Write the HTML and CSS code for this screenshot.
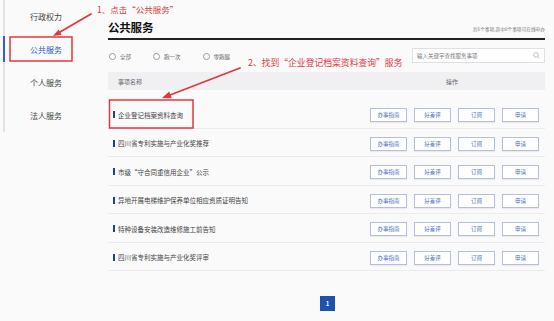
FILE: index.html
```html
<!DOCTYPE html>
<html lang="zh">
<head>
<meta charset="utf-8">
<link rel="stylesheet" href="styles.css">
</head>
<body>
<div class="page">
  <aside class="sidebar">
    <ul class="nav">
      <li class="nav-item">行政权力</li>
      <li class="nav-item active">公共服务</li>
      <li class="nav-item">个人服务</li>
      <li class="nav-item">法人服务</li>
    </ul>
  </aside>
  <main class="main">
    <div class="title-row">
      <h1 class="title">公共服务</h1>
      <span class="count">共6个事项,其中6个事项可在线申办</span>
    </div>
    <div class="filter-row">
      <div class="radios">
        <label class="radio"><span class="circle"></span>全部</label>
        <label class="radio"><span class="circle"></span>跑一次</label>
        <label class="radio"><span class="circle"></span>零跑腿</label>
      </div>
      <div class="search">
        <span class="placeholder">输入关键字查找服务事项</span>
        <svg class="search-icon" width="7" height="7" viewBox="0 0 10 10"><circle cx="4.2" cy="4.2" r="3.3" fill="none" stroke="#aaa" stroke-width="1"/><line x1="6.6" y1="6.6" x2="9.2" y2="9.2" stroke="#aaa" stroke-width="1"/></svg>
      </div>
    </div>
    <div class="thead">
      <span class="col-name">事项名称</span>
      <span class="col-ops">操作</span>
    </div>
    <div class="rows">
      <div class="row"><span class="name"><i class="bar"></i>企业登记档案资料查询</span><span class="ops"><span class="btn">办事指南</span><span class="btn">好差评</span><span class="btn">订阅</span><span class="btn">申请</span></span></div>
      <div class="row"><span class="name"><i class="bar"></i>四川省专利实施与产业化奖推荐</span><span class="ops"><span class="btn">办事指南</span><span class="btn">好差评</span><span class="btn">订阅</span><span class="btn">申请</span></span></div>
      <div class="row"><span class="name"><i class="bar"></i>市级“守合同重信用企业”公示</span><span class="ops"><span class="btn">办事指南</span><span class="btn">好差评</span><span class="btn">订阅</span><span class="btn">申请</span></span></div>
      <div class="row"><span class="name"><i class="bar"></i>异地开展电梯维护保养单位相应资质证明告知</span><span class="ops"><span class="btn">办事指南</span><span class="btn">好差评</span><span class="btn">订阅</span><span class="btn">申请</span></span></div>
      <div class="row"><span class="name"><i class="bar"></i>特种设备安装改造维修施工前告知</span><span class="ops"><span class="btn">办事指南</span><span class="btn">好差评</span><span class="btn">订阅</span><span class="btn">申请</span></span></div>
      <div class="row"><span class="name"><i class="bar"></i>四川省专利实施与产业化奖评审</span><span class="ops"><span class="btn">办事指南</span><span class="btn">好差评</span><span class="btn">订阅</span><span class="btn">申请</span></span></div>
    </div>
    <div class="pager"><span class="page-num">1</span></div>
  </main>

  <div class="note note-1">1、点击“公共服务”</div>
  <div class="note note-2">2、找到“企业登记档案资料查询”服务</div>
  <svg class="overlay" width="554" height="321" viewBox="0 0 554 321">
    <rect x="10" y="37" width="62" height="24" fill="none" stroke="#e0383b" stroke-width="1.5"/>
    <rect x="109.5" y="100" width="83.5" height="28" fill="none" stroke="#e0383b" stroke-width="1.5"/>
    <line x1="91" y1="14" x2="60" y2="32" stroke="#e0383b" stroke-width="1.8" stroke-linecap="round"/>
    <polygon points="53,36 61.6,34.8 58.6,29.4" fill="#e0383b"/>
    <line x1="240" y1="68" x2="170" y2="95" stroke="#e0383b" stroke-width="1.8" stroke-linecap="round"/>
    <polygon points="162,98 171.8,98.3 169.2,91.6" fill="#e0383b"/>
  </svg>
</div>
</body>
</html>
```
FILE: styles.css
```css
* { box-sizing: border-box; }
html, body {
  margin: 0;
  padding: 0;
}
body {
  background: #fafafb;
  font-family: "Noto Sans CJK SC", "Noto Sans", sans-serif;
  color: #333;
}
.page {
  position: relative;
  width: 554px;
  height: 321px;
  display: flex;
  overflow: hidden;
}
.sidebar {
  width: 100px;
  flex: none;
  padding-left: 3px;
}
.nav {
  list-style: none;
  margin: 0;
  padding: 0;
  border-left: 2px solid #e2e2e6;
}
.nav-item {
  height: 33px;
  display: flex;
  align-items: center;
  padding-left: 25px;
  font-size: 8px;
  color: #444;
  position: relative;
}
.nav-item.active {
  color: #2b5bc0;
}
.nav-item.active::before {
  content: "";
  position: absolute;
  left: -2px;
  top: 3px;
  bottom: 4px;
  width: 2px;
  background: #2b62c9;
}
.main {
  flex: 1;
  padding: 0 9px 0 8px;
  display: flex;
  flex-direction: column;
}
.title-row {
  margin-top: 16px;
  height: 24px;
  display: flex;
  align-items: center;
  justify-content: space-between;
  border-bottom: 2px solid #222;
}
.title {
  margin: 0;
  font-size: 11.5px;
  font-weight: 700;
  color: #111;
  letter-spacing: -0.2px;
}
.count {
  font-size: 4.7px;
  color: #777;
  padding-top: 3px;
}
.filter-row {
  display: flex;
  justify-content: space-between;
  align-items: center;
  margin-top: 8px;
  height: 15px;
}
.radios {
  display: flex;
  align-items: center;
  gap: 22px;
  padding-left: 1px;
  padding-top: 2px;
}
.radio {
  display: flex;
  align-items: center;
  gap: 4px;
  font-size: 5.5px;
  color: #666;
}
.circle {
  width: 7px;
  height: 7px;
  border: 1px solid #999;
  border-radius: 50%;
  background: #fff;
}
.search {
  width: 133px;
  height: 15px;
  border: 1px solid #e0e0e4;
  background: #fff;
  display: flex;
  align-items: center;
  justify-content: space-between;
  padding: 0 4px;
}
.placeholder {
  font-size: 5.5px;
  color: #777;
}
.search-icon { display: block; }
.thead {
  margin-top: 9px;
  height: 18px;
  background: #f0f0f2;
  display: flex;
  align-items: center;
  font-size: 6px;
  color: #666;
}
.col-name {
  flex: 1;
  padding-left: 10px;
}
.col-ops {
  width: 186px;
  text-align: center;
}
.rows {
  margin-top: 10px;
}
.row {
  height: 28.5px;
  display: flex;
  align-items: center;
  border-bottom: 1px solid #ebebee;
}
.name {
  flex: 1;
  display: flex;
  align-items: center;
  font-size: 6.5px;
  color: #444;
  padding-left: 5px;
  padding-top: 2px;
}
.bar {
  display: inline-block;
  width: 1.5px;
  height: 7px;
  background: #1d3f94;
  margin-right: 3.5px;
}
.ops {
  display: flex;
  gap: 7px;
  padding-right: 6px;
  padding-top: 3px;
}
.btn {
  width: 37px;
  height: 14px;
  border: 1px solid #b4c0db;
  background: #fff;
  color: #4a6cbd;
  font-size: 5.5px;
  display: flex;
  align-items: center;
  justify-content: center;
  box-shadow: 0 1px 1px rgba(0,0,0,0.06);
}
.pager {
  margin-top: 25px;
  display: flex;
  justify-content: center;
  padding-left: 2px;
}
.page-num {
  width: 15px;
  height: 15px;
  background: #1f52ad;
  color: #fff;
  font-size: 6px;
  font-weight: 700;
  display: flex;
  align-items: center;
  justify-content: center;
}
.note {
  position: absolute;
  color: #e0383b;
  white-space: nowrap;
  line-height: 1;
}
.note-1 {
  left: 97px;
  top: 5px;
  font-size: 8.5px;
}
.note-2 {
  left: 248px;
  top: 59px;
  font-size: 8.8px;
}
.overlay {
  position: absolute;
  left: 0;
  top: 0;
  pointer-events: none;
}
```
